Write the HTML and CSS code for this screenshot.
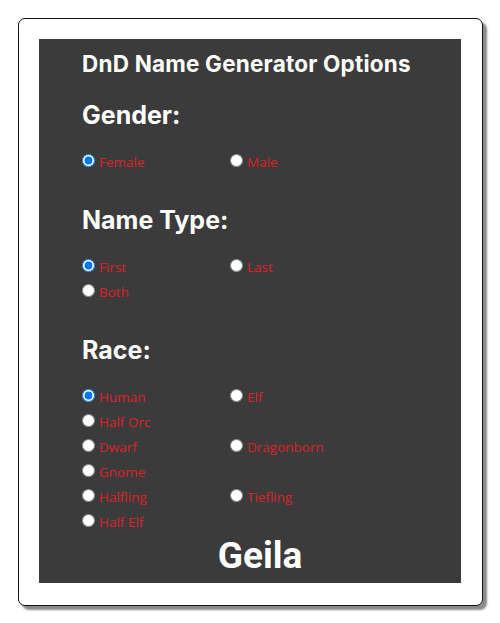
FILE: index.html
```html
<!DOCTYPE html>
<html>
<head>
<meta charset="utf-8">
<link rel="stylesheet" href="styles.css">
</head>
<body>
<div class="card">
  <div class="panel">
    <h1 class="title">DnD Name Generator Options</h1>
    <h2 class="heading heading-first">Gender:</h2>
    <div class="options">
      <label class="opt"><input type="radio" name="g" checked><span>Female</span></label>
      <label class="opt"><input type="radio" name="g"><span>Male</span></label>
    </div>
    <h2 class="heading">Name Type:</h2>
    <div class="options">
      <label class="opt"><input type="radio" name="t" checked><span>First</span></label>
      <label class="opt"><input type="radio" name="t"><span>Last</span></label>
      <label class="opt"><input type="radio" name="t"><span>Both</span></label>
    </div>
    <h2 class="heading">Race:</h2>
    <div class="options">
      <label class="opt"><input type="radio" name="r" checked><span>Human</span></label>
      <label class="opt"><input type="radio" name="r"><span>Elf</span></label>
      <label class="opt full"><input type="radio" name="r"><span>Half Orc</span></label>
      <label class="opt"><input type="radio" name="r"><span>Dwarf</span></label>
      <label class="opt"><input type="radio" name="r"><span>Dragonborn</span></label>
      <label class="opt full"><input type="radio" name="r"><span>Gnome</span></label>
      <label class="opt"><input type="radio" name="r"><span>Halfling</span></label>
      <label class="opt"><input type="radio" name="r"><span>Tiefling</span></label>
      <label class="opt full"><input type="radio" name="r"><span>Half Elf</span></label>
    </div>
    <div class="result">Geila</div>
  </div>
</div>
</body>
</html>
```
FILE: styles.css
```css
html, body {
  margin: 0;
  padding: 0;
  background: #ffffff;
}
body {
  padding: 18px;
}
.card {
  width: 465px;
  height: 588px;
  box-sizing: border-box;
  border: 1px solid #111111;
  border-radius: 7px;
  box-shadow: 4px 4px 2px #8a8a8a;
  padding: 20px 21px 22px 20px;
  background: #ffffff;
}
.panel {
  width: 422px;
  height: 544px;
  box-sizing: border-box;
  background: #3c3b3b;
  padding: 10px 0 0 43px;
  color: #ffffff;
  font-family: Inter, "Noto Sans", sans-serif;
}
.title {
  margin: 0;
  font-size: 22.5px;
  font-weight: 700;
  line-height: 30px;
  letter-spacing: 0.2px;
}
.heading {
  margin: 32px 0 18px;
  font-size: 25px;
  font-weight: 700;
  line-height: 30px;
}
.heading-first {
  margin-top: 21px;
}
.options {
  display: grid;
  grid-template-columns: 148px 148px;
  grid-auto-rows: 25px;
}
.opt {
  display: flex;
  align-items: center;
  font-family: "Open Sans", sans-serif;
  font-size: 13.5px;
  color: #dc2229;
  height: 25px;
}
.opt.full {
  grid-column: 1 / 3;
}
.opt input {
  margin: 0 4px 0 0;
  width: 13px;
  height: 13px;
}
.opt span {
  position: relative;
  top: 1px;
}
.result {
  margin: 3px 0 0 -23px;
  text-align: center;
  font-family: Roboto, "Liberation Sans", sans-serif;
  font-weight: 700;
  font-size: 37px;
  line-height: 40px;
}
```
